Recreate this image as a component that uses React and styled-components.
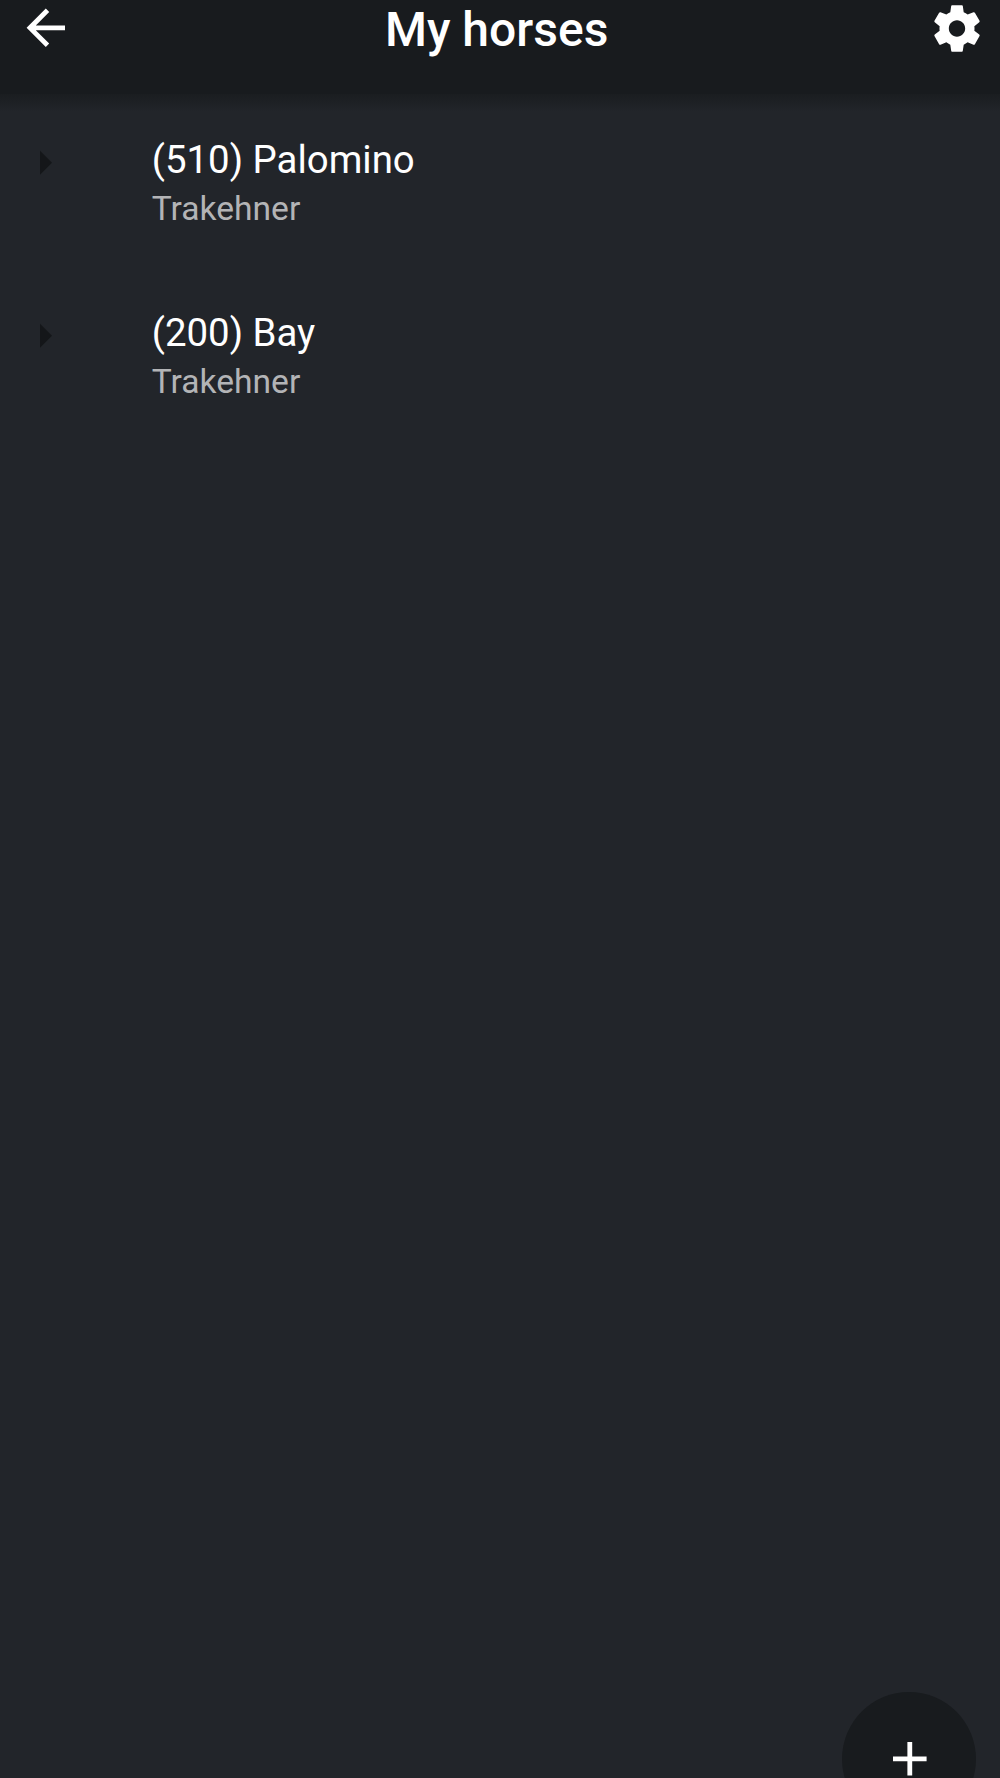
import React from "react";
import styled, { createGlobalStyle } from "styled-components";

const GlobalStyle = createGlobalStyle`
  body {
    margin: 0;
    background: #22252a;
    font-family: Roboto, sans-serif;
  }
`;

const Screen = styled.div`
  position: relative;
  box-sizing: border-box;
  height: 1778px;
  overflow: hidden;
  background: #22252a;
`;

const Header = styled.header`
  display: flex;
  justify-content: space-between;
  align-items: center;
  box-sizing: border-box;
  height: 94px;
  padding: 0 15.3px 38px 17px;
  background: #181b1e;
`;

const HeaderShadow = styled.div`
  height: 18px;
  background: linear-gradient(#1a1d20, #22252a);
`;

const Title = styled.h1`
  margin: 0;
  padding: 4px 10px 0 0;
  font-size: 48px;
  line-height: 56px;
  font-weight: 500;
  color: #fff;
`;

const Icon = styled.svg`
  display: block;
  flex: none;
  width: ${(props) => props.$size || 57.6}px;
  height: ${(props) => props.$size || 57.6}px;
  fill: ${(props) => props.$color || "#fff"};
`;

const List = styled.ul`
  margin: 0;
  padding: 0;
  list-style: none;
`;

const Row = styled.li`
  display: flex;
  box-sizing: border-box;
  height: 173px;
  padding: 22px 16.4px;
  gap: 77.8px;
`;

const Name = styled.div`
  margin-top: 3px;
  font-size: 38.4px;
  line-height: 46px;
  color: #fff;
`;

const Breed = styled.div`
  margin-top: 6px;
  font-size: 33.6px;
  line-height: 40px;
  color: #b3b4b6;
`;

const AddButton = styled.button`
  position: absolute;
  top: 1692px;
  right: 24px;
  display: flex;
  align-items: center;
  justify-content: center;
  width: 134px;
  height: 134px;
  padding: 0 0 0 1px;
  border: 0;
  border-radius: 50%;
  background: #181b1e;
`;

const horses = [
  { name: "(510) Palomino", breed: "Trakehner" },
  { name: "(200) Bay", breed: "Trakehner" },
];

const App = () => {
  return (
    <Screen>
      <GlobalStyle />
      <Header>
        <Icon viewBox="0 0 24 24">
          <path d="M20 11H7.83l5.59-5.59L12 4l-8 8 8 8 1.41-1.41L7.83 13H20v-2z" />
        </Icon>
        <Title>My horses</Title>
        <Icon viewBox="0 -0.2 24 24" $size={56}>
          <path d="M19.43 12.98c.04-.32.07-.64.07-.98s-.03-.66-.07-.98l2.11-1.65c.19-.15.24-.42.12-.64l-2-3.46c-.12-.22-.39-.3-.61-.22l-2.49 1c-.52-.4-1.08-.73-1.69-.98l-.38-2.65C14.46 2.18 14.25 2 14 2h-4c-.25 0-.46.18-.49.42l-.38 2.65c-.61.25-1.17.59-1.69.98l-2.49-1c-.23-.09-.49 0-.61.22l-2 3.46c-.13.22-.07.49.12.64l2.11 1.65c-.04.32-.07.65-.07.98s.03.66.07.98l-2.11 1.65c-.19.15-.24.42-.12.64l2 3.46c.12.22.39.3.61.22l2.49-1c.52.4 1.08.73 1.69.98l.38 2.65c.03.24.24.42.49.42h4c.25 0 .46-.18.49-.42l.38-2.65c.61-.25 1.17-.59 1.69-.98l2.49 1c.23.09.49 0 .61-.22l2-3.46c.12-.22.07-.49-.12-.64l-2.11-1.65zM12 15.5c-1.93 0-3.5-1.57-3.5-3.5s1.57-3.5 3.5-3.5 3.5 1.57 3.5 3.5-1.57 3.5-3.5 3.5z" />
        </Icon>
      </Header>
      <HeaderShadow />

      <List>
        {horses.map((horse) => (
          <Row key={horse.name}>
            <Icon viewBox="0 0 24 24" $color="#141619">
              <path d="M10 17l5-5-5-5v10z" />
            </Icon>
            <div>
              <Name>{horse.name}</Name>
              <Breed>{horse.breed}</Breed>
            </div>
          </Row>
        ))}
      </List>

      <AddButton aria-label="Add">
        <Icon viewBox="0 0 24 24">
          <path d="M19 13h-6v6h-2v-6H5v-2h6V5h2v6h6v2z" />
        </Icon>
      </AddButton>
    </Screen>
  );
};

export default App;
